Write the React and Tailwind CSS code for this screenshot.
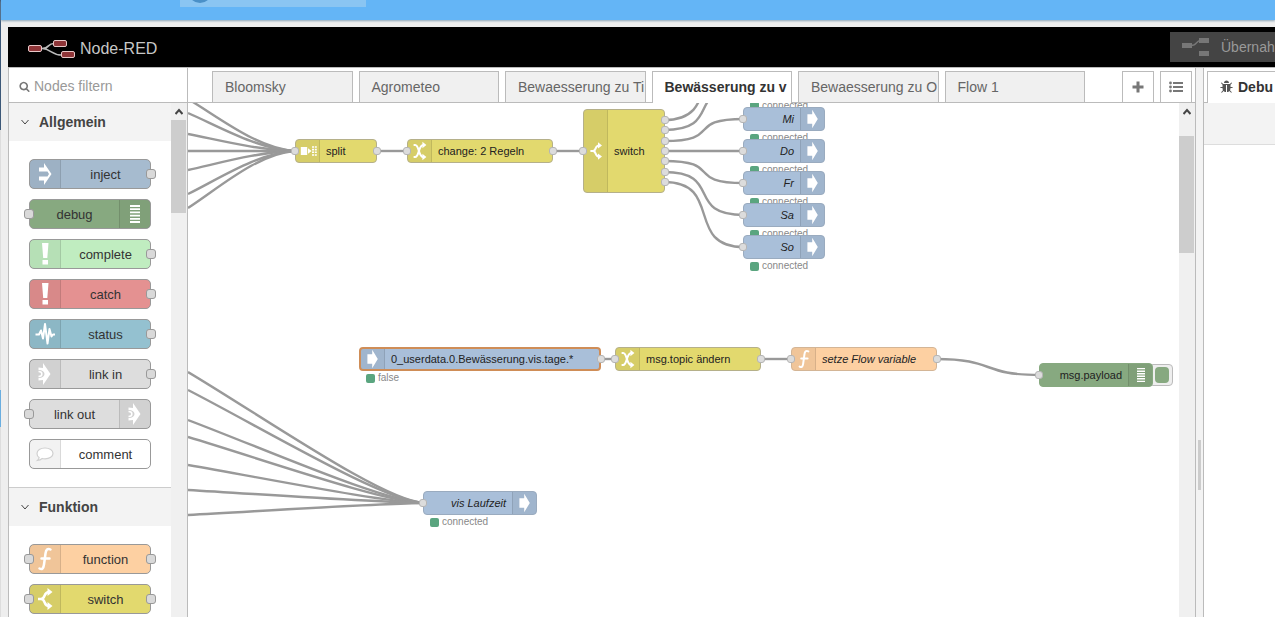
import { useState } from "react";

const paletteCategories = [
  {
    title: "Allgemein",
    nodes: [
      { label: "inject", icon: "inject", color: "bg-[#a6bbcf]", output: true },
      { label: "debug", icon: "debug", color: "bg-[#87a980]", input: true, iconRight: true },
      { label: "complete", icon: "alert", color: "bg-[#c0edc0]", output: true },
      { label: "catch", icon: "alert", color: "bg-[#e49191]", output: true },
      { label: "status", icon: "status", color: "bg-[#94c1d0]", output: true },
      { label: "link in", icon: "link", color: "bg-[#dddddd]", output: true },
      { label: "link out", icon: "link", color: "bg-[#dddddd]", input: true, iconRight: true },
      { label: "comment", icon: "comment", color: "bg-white" },
    ],
  },
  {
    title: "Funktion",
    nodes: [
      { label: "function", icon: "function", color: "bg-[#fdd0a2]", input: true, output: true },
      { label: "switch", icon: "switch", color: "bg-[#e2d96e]", input: true, output: true },
    ],
  },
];

const tabs = [
  "Bloomsky",
  "Agrometeo",
  "Bewaesserung zu Ti",
  "Bewässerung zu v",
  "Bewaesserung zu O",
  "Flow 1",
];

const days = ["Di", "Mi", "Do", "Fr", "Sa", "So"];

const yellow = "bg-[#e2d96e] border-[#b5b08a]";
const blue = "bg-[#a9bfd9] border-[#9aabbf]";

const flowNodes = [
  { label: "split", icon: "split", x: 107, y: 36, w: 82, color: yellow, input: true, outputs: [12] },
  { label: "change: 2 Regeln", icon: "change", x: 219, y: 36, w: 146, color: yellow, input: true, outputs: [12] },
  {
    label: "switch",
    icon: "switch",
    x: 395,
    y: 6,
    w: 82,
    h: 84,
    color: yellow,
    input: true,
    outputs: [11, 21, 32, 42, 52, 63, 73],
  },
  ...days.map((day, i) => ({
    label: day,
    icon: "arrow",
    x: 555,
    y: -28 + i * 32,
    w: 82,
    color: blue,
    input: true,
    iconRight: true,
    italic: true,
    status: "connected",
  })),
  {
    label: "0_userdata.0.Bewässerung.vis.tage.*",
    icon: "arrow",
    x: 171,
    y: 244,
    w: 242,
    color: "bg-[#a9bfd9] border-[#cf8d57]",
    selected: true,
    outputs: [12],
    status: "false",
  },
  { label: "msg.topic ändern", icon: "change", x: 427, y: 244, w: 146, color: yellow, input: true, outputs: [12] },
  {
    label: "setze Flow variable",
    icon: "function",
    x: 603,
    y: 244,
    w: 146,
    color: "bg-[#fdd0a2] border-[#d3b596]",
    input: true,
    italic: true,
    outputs: [12],
  },
  {
    label: "msg.payload",
    icon: "debug",
    x: 851,
    y: 260,
    w: 114,
    color: "bg-[#87a980] border-[#87a980]",
    input: true,
    iconRight: true,
    toggle: true,
  },
  {
    label: "vis Laufzeit",
    icon: "arrow",
    x: 235,
    y: 388,
    w: 114,
    color: blue,
    input: true,
    iconRight: true,
    italic: true,
    status: "connected",
  },
];

const splitSources = [-4, 10, 31, 48, 67, 91, 105];
const laufzeitSources = [269, 287, 317, 334, 362, 387, 412];
const switchWires = [
  [17, -48],
  [27, -16],
  [38, 16],
  [48, 48],
  [58, 80],
  [69, 112],
  [79, 144],
];

const wires = [
  ...splitSources.map((y) => `M0 ${y}C30 ${y + (48 - y) * 0.34} 70 ${y + (48 - y) * 0.96} 107 48`),
  ...laufzeitSources.map((y) => `M0 ${y}C80 ${y + (400 - y) * 0.365} 195 ${y + (400 - y) * 0.98} 236 400`),
  ...switchWires.map(([from, to]) => `M476 ${from}C536 ${from} 496 ${to} 556 ${to}`),
  "M188 48H220",
  "M364 48H396",
  "M412 256H428",
  "M572 256H604",
  "M748 256C808 256 792 272 852 272",
];

const line = { fill: "none", stroke: "#fff", strokeWidth: 2.5 };

const icons = {
  inject: <path fill="#fff" d="M9 8.500h5V4l7.500 11L14 26v-4.500H9v-4h8.500l1.500-2.500-1.500-2.500H9z" />,
  arrow: <path fill="#fff" d="M8 9h6V3.500L21 15l-7 11.500V21H8z" />,
  alert: <path fill="#fff" d="M12 4h6.500l-1.200 15h-4.100zM12.500 21h5.500v4.500h-5.500z" />,
  debug: (
    <path stroke="#fff" strokeWidth="1.800" d="M10 7h10M10 10.200h10M10 13.400h10M10 16.600h10M10 19.800h10M10 23h10" />
  ),
  status: (
    <path
      fill="none"
      stroke="#fff"
      strokeWidth="2"
      strokeLinejoin="round"
      d="M5.500 15.500h3.500l2-4 2 8L15 5l2.500 19.500L19.500 10l2 7.500 1.500-2h2"
    />
  ),
  link: (
    <g>
      <path fill="#fff" d="M13 4l7.500 11L13 26v-5l-4.500.5v-2.500c8 0 8-8 0-8V8.500L13 9z" />
      <path fill="none" stroke="#fff" strokeWidth="1.500" d="M8.500 12.500c4.500 0 4.500 5 0 5" />
    </g>
  ),
  comment: (
    <path
      fill="#fff"
      stroke="#d0d0d0"
      strokeWidth="1.200"
      d="M15 9c4.500 0 8 2.300 8 5.400s-3.500 5.400-8 5.400c-1 0-2-.1-2.800-.3-1.200 1-2.600 1.700-4.700 1.900 1-.8 1.500-1.700 1.600-2.900C7.500 17.500 7 16 7 14.400 7 11.300 10.500 9 15 9z"
    />
  ),
  function: <path {...line} strokeLinecap="round" d="M20.500 5.500c-3-1.500-4.500 0-5 4l-1.500 11c-.5 4-2 5.500-4.500 4M11.500 14.500h8" />,
  switch: (
    <g>
      <path {...line} d="M8 15h4M19 8c-6 0-3 7-8 7M19 22c-6 0-3-7-8-7" />
      <path fill="#fff" d="M17.500 4l5 4-5 4zM17.500 18l5 4-5 4z" />
    </g>
  ),
  change: (
    <g>
      <path {...line} d="M7 7.500h2c5 0 4 15 10 15M7 22.500h2c5 0 4-15 10-15" />
      <path fill="#fff" d="M18 3.500l5 4-5 4zM18 18.500l5 4-5 4z" />
    </g>
  ),
  split: (
    <path
      fill="#fff"
      d="M6 10h8v10H6zM15 11.500l4.500 3.500-4.500 3.500zM20 9h2.500v2H20zM23.500 9H26v2h-2.500zM20 12.300h2.500v2H20zM23.500 12.300H26v2h-2.500zM20 15.600h2.500v2H20zM23.500 15.600H26v2h-2.500zM20 19h2.500v2H20zM23.500 19H26v2h-2.500z"
    />
  ),
};

function NodeIcon({ name, className }) {
  return (
    <svg viewBox="0 0 30 30" className={`shrink-0 ${className}`} aria-hidden="true">
      {icons[name]}
    </svg>
  );
}

function Logo() {
  return (
    <svg viewBox="0 0 48 20" className="h-5 w-12" aria-hidden="true">
      <path
        fill="none"
        stroke="#bbb"
        strokeWidth="1.500"
        d="M14 9.500c8 0 5-5 12-5M14 9.500c9 0 9 6.500 20 6.500"
      />
      <g fill="#8f3538" stroke="#e8c8c8" strokeWidth="1">
        <rect x="0.500" y="6.500" width="13" height="6" rx="1.500" />
        <rect x="25.500" y="1.500" width="13" height="6" rx="1.500" />
        <rect x="33.500" y="12.500" width="13" height="6" rx="1.500" />
      </g>
    </svg>
  );
}

function DeployIcon() {
  return (
    <svg viewBox="0 0 28 18" className="h-[18px] w-7" aria-hidden="true">
      <path fill="none" stroke="#777" strokeWidth="1.500" d="M9 7.500c7 0 4-5 10-5" />
      <path fill="#777" d="M0 5h10v5H0zM17 0h10v5H17zM17 13h10v5H17z" />
    </svg>
  );
}

function SearchIcon() {
  return (
    <svg viewBox="0 0 1792 1792" className="h-[11px] w-[11px]" fill="#777" aria-hidden="true">
      <path d="M1216 832q0-185-131.500-316.500t-316.500-131.500-316.500 131.500-131.500 316.500 131.500 316.500 316.500 131.500 316.500-131.500 131.500-316.500zm512 832q0 52-38 90t-90 38q-54 0-90-38l-343-342q-179 124-399 124-143 0-273.500-55.500t-225-150-150-225-55.500-273.500 55.500-273.500 150-225 225-150 273.500-55.500 273.500 55.500 225 150 150 225 55.500 273.500q0 220-124 399l343 343q37 37 37 90z" />
    </svg>
  );
}

function BugIcon() {
  return (
    <svg viewBox="0 0 1792 1792" className="h-3.5 w-3.5 shrink-0" fill="#555" aria-hidden="true">
      <path d="M1632 960q0 26-19 45t-45 19h-224q0 171-67 290l208 209q19 19 19 45t-19 45q-18 19-45 19t-45-19l-198-197q-5 5-15 13t-42 28.500-65 36.500-82 29-97 13v-896h-128v896q-51 0-101.500-13.500t-87-33-66-39-43.500-32.500l-15-14-183 207q-20 21-48 21-24 0-43-16-19-18-20.500-44.500t15.500-46.500l202-227q-58-114-58-274h-224q-26 0-45-19t-19-45 19-45 45-19h224v-294l-173-173q-19-19-19-45t19-45 45-19 45 19l173 173h844l173-173q19-19 45-19t45 19 19 45-19 45l-173 173v294h224q26 0 45 19t19 45zm-480-576h-640q0-133 93.500-226.500t226.500-93.500 226.500 93.500 93.500 226.500z" />
    </svg>
  );
}

function Chevron({ up, className }) {
  return (
    <svg viewBox="0 0 8 8" className={className} fill="none" stroke="currentColor" aria-hidden="true">
      <path d={up ? "M0.500 6L4 2l3.500 4" : "M0.500 2L4 6l3.500-4"} />
    </svg>
  );
}

function Scrollbar({ thumb }) {
  return (
    <div className="flex w-4 shrink-0 flex-col bg-[#f0f0f0]">
      <div className="flex h-[17px] items-center justify-center text-[#444]">
        <Chevron up className="h-2 w-2 stroke-2" />
      </div>
      <div className={`w-[15px] bg-[#cdcdcd] ${thumb}`} />
    </div>
  );
}

function PaletteNode({ node }) {
  const port =
    "absolute top-[9px] h-2.5 w-2.5 rounded-[3px] border border-[#999] bg-[#d9d9d9]";
  return (
    <div
      className={`relative flex h-[30px] w-[122px] rounded-[5px] border border-[#999] ${node.color} ${
        node.iconRight ? "flex-row-reverse" : ""
      }`}
    >
      <div
        className={`flex w-[31px] shrink-0 items-center bg-black/5 ${
          node.iconRight ? "border-l border-black/10" : "border-r border-black/10"
        }`}
      >
        <NodeIcon name={node.icon} className="h-[30px] w-[30px]" />
      </div>
      <div className="flex-1 text-center text-[13px] leading-[30px] text-[#333]">{node.label}</div>
      {node.input && <span className={`${port} -left-1.5`} />}
      {node.output && <span className={`${port} -right-1.5`} />}
    </div>
  );
}

function Palette() {
  return (
    <aside className="flex w-[180px] shrink-0 flex-col border-x border-[#bbb] bg-white">
      <label className="flex h-[35px] shrink-0 items-center gap-1 border-b border-[#bbb] pt-0.5 pl-2.5">
        <SearchIcon />
        <input
          type="text"
          placeholder="Nodes filtern"
          aria-label="Nodes filtern"
          className="w-32 text-sm outline-none placeholder:text-[#999]"
        />
      </label>
      <div className="flex min-h-0 flex-1">
        <div className="flex-1 overflow-hidden">
          {paletteCategories.map((category, i) => (
            <section key={category.title} className={i > 0 ? "border-t border-[#ccc]" : ""}>
              <button
                type="button"
                className="flex h-[38px] w-full items-center gap-2.5 bg-[#f3f3f3] pl-3 text-sm font-bold text-[#444]"
              >
                <Chevron className="h-2 w-2" />
                {category.title}
              </button>
              <div className="flex flex-col gap-2.5 py-[18px] pl-5">
                {category.nodes.map((node) => (
                  <PaletteNode key={node.label} node={node} />
                ))}
              </div>
            </section>
          ))}
        </div>
        <Scrollbar thumb="h-[93px]" />
      </div>
    </aside>
  );
}

function FlowNode({ node }) {
  const height = node.h || 24;
  const port = "absolute h-2 w-2 rounded-[3px] border border-[#b5b5b5] bg-[#dcdcdc]";
  return (
    <div
      className="absolute"
      style={{ left: node.x, top: node.y, width: node.w, height }}
    >
      {node.toggle && (
        <button
          type="button"
          aria-label="Debug"
          className="absolute top-px -right-5 flex h-[22px] w-6 items-center justify-end rounded-[4px] border border-[#bbb] bg-[#eee] pr-[3px]"
        >
          <span className="h-4 w-3.5 rounded-[4px] bg-[#87a980]" />
        </button>
      )}
      <div
        className={`relative flex h-full overflow-hidden rounded-[4px] ${node.color} ${
          node.selected ? "border-2" : "border"
        } ${node.iconRight ? "flex-row-reverse" : ""}`}
      >
        <div
          className={`flex w-6 shrink-0 items-center bg-black/5 ${
            node.iconRight ? "border-l border-black/10" : "border-r border-black/10"
          }`}
        >
          <NodeIcon name={node.icon} className="h-6 w-6" />
        </div>
        <div
          className={`flex flex-1 items-center px-1.5 text-[11px] whitespace-nowrap text-[#222] ${
            node.italic ? "italic" : ""
          } ${node.iconRight ? "justify-end" : ""}`}
        >
          {node.label}
        </div>
      </div>
      {node.input && <span className={`${port} -left-1`} style={{ top: height / 2 - 4 }} />}
      {node.outputs?.map((y) => (
        <span key={y} className={`${port} -right-1`} style={{ top: y - 4 }} />
      ))}
      {node.status && (
        <div className="absolute top-[26px] left-[7px] flex items-center gap-[3px] text-[10px] leading-[10px] text-[#888]">
          <span className="h-[9px] w-[9px] rounded-[2px] bg-[#5aa57f]" />
          {node.status}
        </div>
      )}
    </div>
  );
}

function Workspace() {
  const [active, setActive] = useState(3);
  const square =
    "flex h-[31px] w-8 shrink-0 items-center justify-center border border-b-0 border-[#bbb] bg-white";

  return (
    <main className="flex min-w-0 flex-1 flex-col border-r border-[#bbb] bg-white">
      <div className="flex h-[35px] shrink-0 items-end border-b border-[#bbb] pr-[3px] pl-6">
        <div className="mr-[37px] flex min-w-0 flex-1 items-end gap-1.5">
          {tabs.map((tab, i) => (
            <button
              key={tab}
              type="button"
              onClick={() => setActive(i)}
              className={`min-w-0 flex-1 basis-0 overflow-hidden border border-b-0 border-[#bbb] pl-3 text-left text-sm whitespace-nowrap ${
                i === active
                  ? "-mb-px h-8 bg-white pb-0.5 font-bold text-[#333]"
                  : "h-[31px] bg-[#f0f0f0] text-[#666]"
              }`}
            >
              {tab}
            </button>
          ))}
        </div>
        <div className="flex gap-1.5">
          <button type="button" aria-label="Flow hinzufügen" className={square}>
            <svg viewBox="0 0 12 12" className="h-3 w-3" aria-hidden="true">
              <path stroke="#777" strokeWidth="3" d="M6 0.500v11M0.500 6h11" />
            </svg>
          </button>
          <button type="button" aria-label="Flows auflisten" className={square}>
            <svg viewBox="0 0 14 12" className="h-3 w-3.5" fill="#777" aria-hidden="true">
              <path d="M4 1h10v2H4zM4 5h10v2H4zM4 9h10v2H4z" />
              <circle cx="1.500" cy="2" r="1.400" />
              <circle cx="1.500" cy="6" r="1.400" />
              <circle cx="1.500" cy="10" r="1.400" />
            </svg>
          </button>
        </div>
      </div>
      <div className="flex min-h-0 flex-1">
        <div className="relative flex-1 overflow-hidden">
          <svg className="absolute inset-0 h-full w-full" fill="none" stroke="#999" strokeWidth="2.400">
            {wires.map((d) => (
              <path key={d} d={d} />
            ))}
          </svg>
          {flowNodes.map((node, i) => (
            <FlowNode key={i} node={node} />
          ))}
        </div>
        <Scrollbar thumb="mt-4 h-[117px]" />
      </div>
    </main>
  );
}

function Sidebar() {
  return (
    <aside className="flex w-[72px] shrink-0 flex-col overflow-hidden border-l border-[#bbb] bg-white">
      <div className="flex h-[35px] shrink-0 items-end border-b border-[#bbb] pl-[3px]">
        <button
          type="button"
          className="-mb-px flex h-8 flex-1 items-center gap-1 border border-r-0 border-b-0 border-[#bbb] bg-white pb-0.5 pl-3 text-sm font-bold text-[#333]"
        >
          <BugIcon />
          Debu
        </button>
      </div>
      <div className="h-[42px] shrink-0 border-b border-[#ddd] bg-[#f3f3f3]" />
    </aside>
  );
}

export default function App() {
  return (
    <div className="flex h-screen overflow-hidden bg-[#eeeeee] font-['Liberation_Sans',Arial,sans-serif]">
      <div className="flex w-px shrink-0 flex-col bg-[#dddddd]">
        <div className="h-[130px] bg-[#3c5878]" />
        <div className="mt-[260px] h-[37px] bg-[#6aaee0]" />
      </div>
      <div className="flex min-w-0 flex-1 flex-col">
        <div className="h-5 shrink-0 bg-[#64b5f6] pl-[179px] shadow-[0_1px_2px_#8aa4b8]">
          <div className="h-[7px] w-[186px] overflow-hidden bg-[#8ac5f2] pl-2">
            <div className="-mt-[21px] h-6 w-6 rounded-full bg-[#4a90c8]" />
          </div>
        </div>
        <div className="mt-[7px] ml-[7px] flex min-h-0 flex-1 flex-col">
          <header className="flex h-10 shrink-0 items-center justify-between overflow-hidden bg-black pl-5">
            <div className="flex items-center gap-1 pt-1">
              <Logo />
              <span className="text-base text-[#c7c7c7]">Node-RED</span>
            </div>
            <button
              type="button"
              className="flex h-[30px] w-[105px] items-center gap-[11px] overflow-hidden bg-[#444] pl-3 text-sm text-[#999]"
            >
              <span className="shrink-0">
                <DeployIcon />
              </span>
              Übernah
            </button>
          </header>
          <div className="flex min-h-0 flex-1 border-t border-[#bbb]">
            <Palette />
            <Workspace />
            <div className="flex w-[7px] shrink-0 items-start justify-center bg-[#f3f3f3]">
              <div className="mt-[372px] h-[50px] w-[3px] bg-[#ccc]" />
            </div>
            <Sidebar />
          </div>
        </div>
      </div>
    </div>
  );
}
